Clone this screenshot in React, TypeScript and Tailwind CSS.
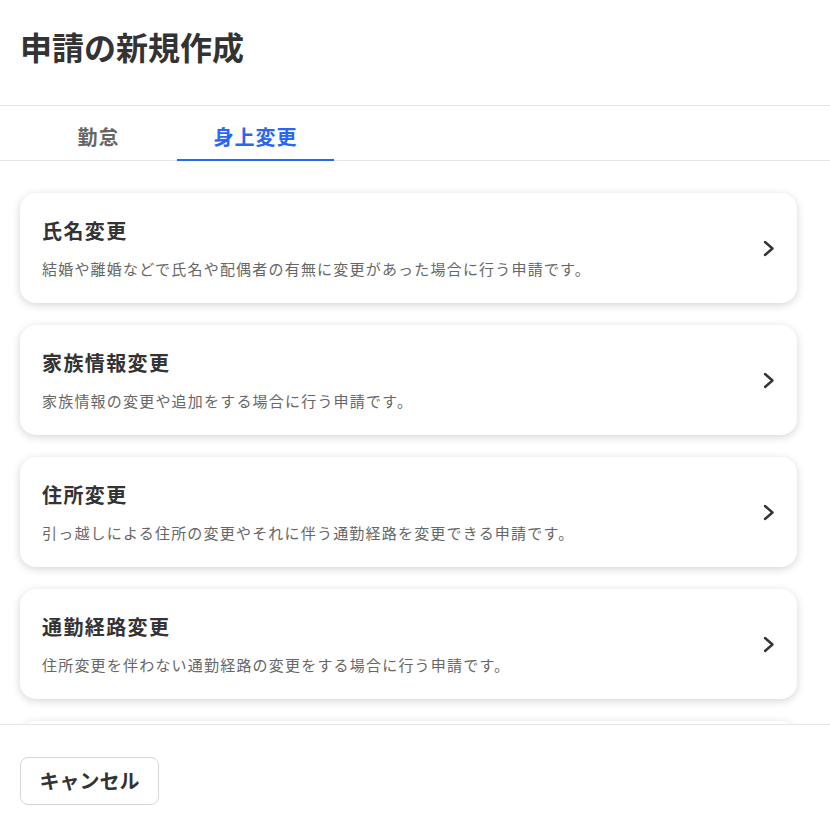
import { useState } from "react";

const items = [
  {
    title: "氏名変更",
    desc: "結婚や離婚などで氏名や配偶者の有無に変更があった場合に行う申請です。",
  },
  {
    title: "家族情報変更",
    desc: "家族情報の変更や追加をする場合に行う申請です。",
  },
  {
    title: "住所変更",
    desc: "引っ越しによる住所の変更やそれに伴う通勤経路を変更できる申請です。",
  },
  {
    title: "通勤経路変更",
    desc: "住所変更を伴わない通勤経路の変更をする場合に行う申請です。",
  },
  {
    title: "口座情報変更",
    desc: "給与振込口座を変更する場合に行う申請です。",
  },
];

const Chevron = () => (
  <svg width="12" height="17" viewBox="0 0 12 17" fill="none" className="shrink-0">
    <polyline
      points="2,2 9.5,8.5 2,15"
      stroke="#333333"
      strokeWidth="2.4"
      strokeLinecap="round"
      strokeLinejoin="round"
    />
  </svg>
);

export default function App() {
  const [tab, setTab] = useState(1);
  const tabs = ["勤怠", "身上変更"];

  return (
    <div
      className="flex h-[826px] w-full flex-col overflow-hidden bg-white text-[#333]"
      style={{ fontFamily: '"Noto Sans CJK JP", "Noto Sans", sans-serif' }}
    >
      <div className="h-[106px] shrink-0 border-b border-[#e6e6e6] px-5 pt-6">
        <h1 className="text-[32px] font-bold leading-[45px]">申請の新規作成</h1>
      </div>

      <div className="flex h-[55px] shrink-0 border-b border-[#e6e6e6] px-5">
        {tabs.map((t, i) => (
          <button
            key={t}
            onClick={() => setTab(i)}
            className={
              i === tab
                ? "-mb-px flex w-[157px] items-center justify-center border-b-2 border-[#2b66ee] pt-2 text-[20px] font-bold leading-[30px] tracking-[0.05em] text-[#2b66ee]"
                : "-mb-px flex w-[157px] items-center justify-center border-b-2 border-transparent pt-2 text-[20px] font-bold leading-[30px] tracking-[0.05em] text-[#666]"
            }
          >
            {t}
          </button>
        ))}
      </div>

      <div className="min-h-0 flex-1 overflow-hidden">
        <div className="flex flex-col gap-[22px] pt-8 pr-[33px] pb-8 pl-5">
          {items.map((it) => (
            <div
              key={it.title}
              className="flex h-[110px] items-center justify-between rounded-2xl bg-white pr-[22px] pl-[22px] shadow-[0_2px_8px_rgba(0,0,0,0.17)]"
            >
              <div className="flex flex-col gap-3">
                <div className="text-[20px] font-bold leading-[30px] tracking-[0.07em]">
                  {it.title}
                </div>
                <div className="text-[15px] leading-[22px] tracking-[1.2px] text-[#666]">
                  {it.desc}
                </div>
              </div>
              <Chevron />
            </div>
          ))}
        </div>
      </div>

      <div className="h-[102px] shrink-0 border-t border-[#e6e6e6] px-5 pt-8">
        <button className="flex h-12 w-[139px] items-center justify-center whitespace-nowrap rounded-lg border border-[#d6d6d6] bg-white text-[20px] leading-[28px] font-bold text-[#333]">
          キャンセル
        </button>
      </div>
    </div>
  );
}
